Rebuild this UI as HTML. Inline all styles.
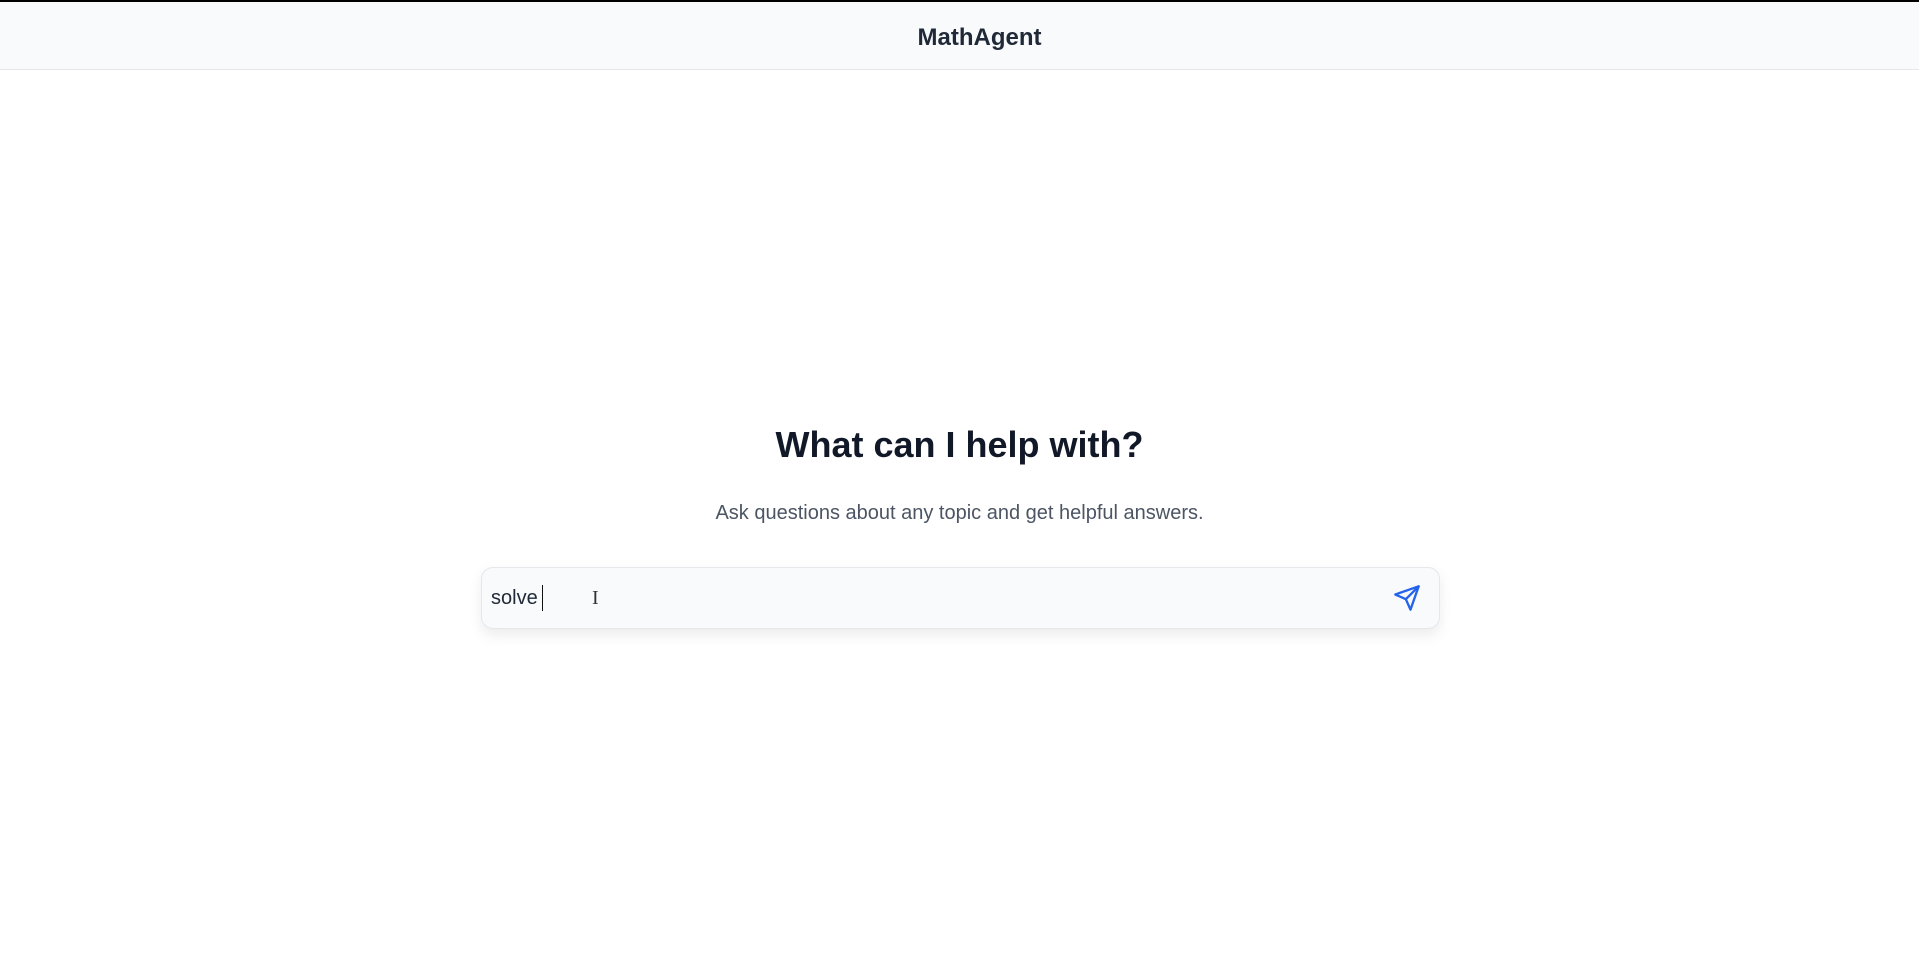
<!DOCTYPE html>
<html><head><meta charset="utf-8"><style>
html,body{margin:0;padding:0;width:1919px;height:974px;background:#fff;overflow:hidden;font-family:"Liberation Sans",sans-serif;}
.top{position:absolute;left:0;top:0;width:1919px;height:2px;background:#000;}
.hdr{position:absolute;left:0;top:2px;width:1919px;height:68px;background:#f9fafb;border-bottom:1px solid #e5e7eb;display:flex;align-items:center;justify-content:center;font-size:24px;font-weight:600;color:#1f2937;box-sizing:border-box;padding-left:40px;padding-top:4px;}
h1{position:absolute;left:0;width:1919px;top:418px;margin:0;text-align:center;font-size:36px;font-weight:700;color:#111827;line-height:54px;}
.sub{position:absolute;left:0;width:1919px;top:502px;text-align:center;font-size:20px;color:#4b5563;}
.box{position:absolute;left:481px;top:567px;width:957px;height:60px;border:1px solid #e5e7eb;border-radius:12px;background:#f9fafb;box-shadow:0 6px 14px rgba(0,0,0,0.08);}
.txt{position:absolute;left:9px;top:19px;font-size:20px;color:#1f2937;}
.caret{position:absolute;left:60px;top:17px;width:1px;height:26px;background:#111;}
.ibeam{position:absolute;left:110px;top:19px;font-size:20px;color:#333;font-family:"Liberation Serif",serif;}
svg{position:absolute;left:911px;top:16px;}
</style></head><body>
<div class="top"></div>
<div class="hdr">MathAgent</div>
<h1>What can I help with?</h1>
<div class="sub">Ask questions about any topic and get helpful answers.</div>
<div class="box">
<div class="txt">solve</div><div class="caret"></div><div class="ibeam">I</div>
<svg width="28" height="28" viewBox="0 0 24 24" fill="none" stroke="#2563eb" stroke-width="2" stroke-linejoin="round" stroke-linecap="round"><path d="M22 2L11 13"/><path d="M22 2L15 22L11 13L2 9L22 2Z"/></svg>
</div>
</body></html>
